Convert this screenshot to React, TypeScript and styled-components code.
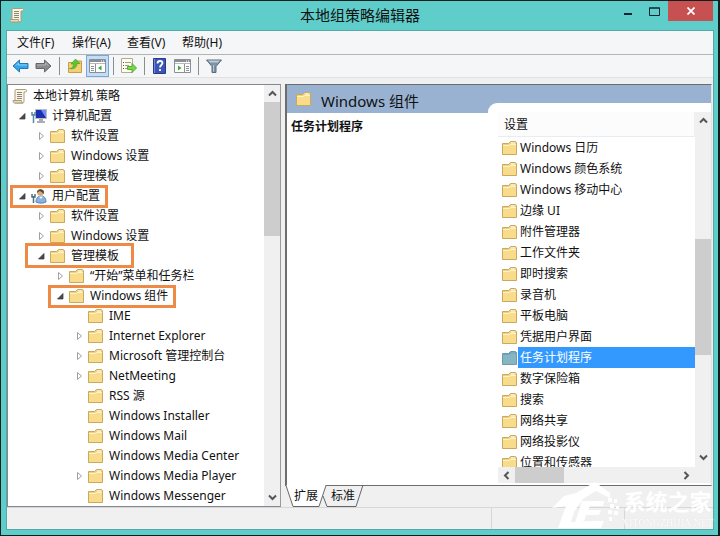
import React from "react";
import styled, { createGlobalStyle, css } from "styled-components";

const Global = createGlobalStyle`
  * { box-sizing: border-box; }
  html, body, #root { height: 100%; }
  body { margin: 0; overflow: hidden; }
  body, button {
    font-family: "Noto Sans", "Noto Sans CJK SC", sans-serif;
    font-size: 12px;
    line-height: 20px;
    color: #111;
  }
  button { border: 0; padding: 0; margin: 0; background: none; }
  ul { list-style: none; margin: 0; padding: 0; }
  svg { display: block; flex: none; }
`;

const Frame = styled.div`
  position: relative;
  display: flex;
  flex-direction: column;
  height: 100vh;
  padding: 0 5px 6px 6px;
  border: 1px solid #10201f;
  border-right-width: 2px;
  background: #5fcecb;
`;
const TitleBar = styled.header`
  display: grid;
  grid-template-columns: 92px 1fr 92px;
  height: 30px;
  flex: none;
`;
const TitleIcon = styled.div`
  padding: 6px 0 0 2px;
`;
const Title = styled.h1`
  margin: 0;
  font-size: 15px;
  font-weight: 400;
  line-height: 28px;
  text-align: center;
`;
const WindowButtons = styled.div`
  display: flex;
  justify-content: flex-end;
  align-items: flex-start;
`;
const WindowButton = styled.button<{ $close?: boolean }>`
  display: grid;
  place-items: center;
  width: ${(p) => (p.$close ? 45 : 27)}px;
  height: 20px;
  flex: none;
  background: ${(p) => (p.$close ? "#c75050" : "transparent")};
`;
const Client = styled.main`
  flex: 1;
  min-height: 0;
  display: flex;
  flex-direction: column;
  background: #f0f0f0;
  outline: 1px solid #55a9a7;
`;
const MenuBar = styled.nav`
  display: flex;
  height: 24px;
  flex: none;
  padding: 0 10px;
  background: #f5f6f7;
  border-bottom: 1px solid #b4b4b4;
`;
const MenuItem = styled.button`
  width: 55px;
  text-align: left;
  line-height: 22px;
`;
const ToolBar = styled.div`
  display: flex;
  align-items: center;
  height: 23px;
  flex: none;
  padding-left: 2px;
  background: #f5f6f7;
  border-bottom: 1px solid #e2e2e2;
`;
const Tool = styled.button<{ $active?: boolean }>`
  display: grid;
  place-items: center;
  width: 23px;
  height: 22px;
  ${(p) =>
    p.$active &&
    css`
      background: #c4dcf5;
      border: 1px solid #74a9dc;
    `}
`;
const Separator = styled.span`
  width: 1px;
  height: 18px;
  margin: 0 3px 0 4px;
  background: #8d8d8d;
`;
const Panes = styled.div`
  flex: 1;
  min-height: 0;
  display: grid;
  grid-template-columns: minmax(0, 274fr) minmax(0, 427fr);
  gap: 4px;
  padding: 6px 1px 0 0;
`;
const TreePane = styled.section`
  display: flex;
  min-height: 0;
  background: #fff;
  border: 1px solid #828790;
  border-right-color: #9a9a9a;
`;
const Tree = styled.ul`
  flex: 1;
  min-width: 0;
  overflow: hidden;
  padding-top: 1px;
`;
const TreeRow = styled.li<{ $level: number }>`
  display: flex;
  height: 20px;
  padding-left: ${(p) => (p.$level ? 19 * p.$level - 13 : 4)}px;
`;
const Node = styled.div`
  position: relative;
  display: flex;
  align-items: center;
`;
const Highlight = styled.span<{ $wide?: boolean }>`
  position: absolute;
  inset: ${(p) => (p.$wide ? "-3px -15px -2px -8px" : "-1px -8px -2px -4px")};
  border: 3px solid #ed8a45;
  pointer-events: none;
`;
const Toggle = styled.button`
  display: grid;
  place-items: center;
  width: 17px;
  height: 20px;
`;
const NodeLabel = styled.button`
  display: flex;
  align-items: center;
  gap: 5px;
  white-space: nowrap;
`;
const IconBox = styled.span`
  width: 16px;
`;
const Spacer = styled.span`
  width: 17px;
`;
const ScrollV = styled.div`
  display: flex;
  flex-direction: column;
  width: 16px;
  flex: none;
  background: #f0f0f0;
`;
const ScrollH = styled.div`
  display: flex;
  height: 16px;
  flex: none;
  background: #f0f0f0;
`;
const ScrollButton = styled.button`
  display: grid;
  place-items: center;
  width: 17px;
  height: 17px;
  flex: none;
`;
const Track = styled.div<{ $before: number; $thumb: number; $after: number; $row?: boolean }>`
  flex: 1;
  display: grid;
  ${(p) => (p.$row ? "grid-template-columns" : "grid-template-rows")}: ${(p) =>
    `${p.$before}fr ${p.$thumb}fr ${p.$after}fr`};
  &::after {
    content: "";
    background: #cdcdcd;
    ${(p) => (p.$row ? "grid-column: 2" : "grid-row: 2")};
  }
`;
const RightSide = styled.div`
  display: flex;
  flex-direction: column;
  min-height: 0;
`;
const DetailPane = styled.section`
  flex: 1;
  min-height: 0;
  display: grid;
  grid-template-columns: minmax(0, 201fr) minmax(0, 223fr);
  grid-template-rows: 18px 10px minmax(0, 1fr);
  background: #fff;
  border: 1px solid #6d6d6d;
  border-left-width: 2px;
  border-right-color: #e3e3e3;
`;
const DetailHeader = styled.header`
  grid-area: 1 / 1 / 3 / 3;
  display: flex;
  align-items: center;
  gap: 10px;
  padding-left: 9px;
  background: #99b2d1;
`;
const DetailTitle = styled.h2`
  margin: 0;
  padding-top: 4px;
  font-size: 15px;
  font-weight: 400;
  line-height: 24px;
`;
const Description = styled.h3`
  grid-area: 3 / 1;
  margin: 0;
  padding: 4px;
  font-size: 12px;
  font-weight: 700;
  line-height: 20px;
`;
const Card = styled.div`
  grid-area: 2 / 2 / 4 / 3;
  display: flex;
  padding: 9px 0 2px 10px;
  background: #fff;
  border-top-left-radius: 9px;
`;
const ListColumn = styled.div`
  flex: 1;
  min-width: 0;
  display: flex;
  flex-direction: column;
`;
const ColumnHeader = styled.div`
  height: 25px;
  flex: none;
  padding-left: 6px;
  line-height: 26px;
  background: #fcfcfc;
  border-bottom: 1px solid #e9edf3;
  border-right: 1px solid #f0f0f0;
`;
const SettingList = styled.ul`
  flex: 1;
  min-height: 0;
  overflow: hidden;
`;
const Setting = styled.button`
  display: flex;
  align-items: center;
  width: 100%;
  height: 21px;
  padding-left: 4px;
`;
const SettingText = styled.span<{ $selected?: boolean }>`
  flex: 1;
  margin-left: 1px;
  padding-left: 2px;
  text-align: left;
  line-height: 21px;
  white-space: nowrap;
  ${(p) =>
    p.$selected &&
    css`
      color: #fff;
      background: #3399ff;
    `}
`;
const Tabs = styled.div`
  position: relative;
  display: flex;
  height: 22px;
  margin-top: -1px;
  flex: none;
`;
const Tab = styled.button`
  position: relative;
  width: 42px;
  height: 22px;
  margin-right: -5px;
`;
const TabShape = styled.svg`
  position: absolute;
  inset: 0;
`;
const TabText = styled.span`
  position: relative;
`;
const StatusBar = styled.footer`
  display: grid;
  grid-template-columns: 485fr 133fr 88fr;
  height: 22px;
  flex: none;
  border-top: 1px solid #d7d7d7;
`;
const StatusCell = styled.div`
  border-right: 1px solid #d7d7d7;
  &:last-child { border-right: 0; }
`;
const Watermark = styled.div`
  position: absolute;
  right: 5px;
  bottom: 6px;
  display: flex;
  align-items: flex-end;
  color: #fff;
  pointer-events: none;
`;
const MarkText = styled.div`
  display: flex;
  flex-direction: column;
  align-items: center;
`;
const MarkName = styled.span`
  font-size: 22px;
  font-weight: 700;
  line-height: 32px;
`;
const MarkUrl = styled.span`
  font-family: "Liberation Serif", serif;
  font-size: 10px;
  line-height: 12px;
  text-shadow: 0 0 1px #d8d8d8;
`;

const Folder = ({ selected = false }: { selected?: boolean }) => {
  const c = selected
    ? { back: "#6da3b5", front: "#86b5c4", line: "#6b9caf", light: "#86b5c4" }
    : { back: "#eed084", front: "#f8dc8c", line: "#c9a95c", light: "#fff3c4" };
  return (
    <svg width="15" height="16" viewBox="0 0 15 16">
      <path d="M.5 3.5h6l2-2h5l1 1v12H.5z" fill={c.back} stroke={c.line} />
      <path d="M9 3h4" stroke={selected ? c.light : "#fff"} />
      <path d="M1 5h6l2-1h5v10H1z" fill={c.front} />
      <path d="M1 5.5h6l2-1h5" fill="none" stroke={c.light} />
    </svg>
  );
};
const Scroll = () => (
  <svg width="16" height="16" viewBox="0 0 16 16">
    <path d="M4 1.500h9.500c1.500 0 1.500 2.500 0 2.500H12v9.500c0 1-.5 1.500-1.500 1.500H3V4C3 2.500 3 1.500 4 1.500z" fill="#fbf6e4" stroke="#ab9c80" />
    <path d="M1 12.500h8.500c0 1.500.5 2.500 1.500 2.500H2.500C1.500 15 1 14 1 12.500z" fill="#e6dabb" stroke="#ab9c80" />
    <path d="M5 4.500h5M5 6.500h5M5 8.500h5M5 10.500h5" stroke="#8b8578" />
  </svg>
);
const Computer = () => (
  <svg width="16" height="16" viewBox="0 0 16 16">
    <path d="M4.500 1.500h11v9h-11z" fill="#1c2fb0" stroke="#b9bdc8" />
    <path d="M10 2h5v8z" fill="#6f8df0" />
    <path d="M8 11h4v2h2v2H6v-2h2z" fill="#a9adb6" />
    <path d="M2.500 6v9M1 4v3h3V4" fill="none" stroke="#5b86a8" strokeWidth="1.500" />
  </svg>
);
const User = () => (
  <svg width="16" height="16" viewBox="0 0 16 16">
    <path d="M5 14c0-4 2-6 5-6s5 2 5 6c-2 1.500-8 1.500-10 0z" fill="#86b3e2" stroke="#5683b8" />
    <path d="M8 8.500l2 2.500 2-2.500z" fill="#fff" />
    <circle cx="9.500" cy="4.500" r="3.300" fill="#d8a878" />
    <path d="M6 5c-.5-5 7.500-5 7 0L12 6c0-2-2-2-3.500-3z" fill="#5c4632" />
    <path d="M2.500 8v7M1 6v3h3V6" fill="none" stroke="#4f6f86" strokeWidth="1.500" />
  </svg>
);
const Arrow = ({ open }: { open: boolean }) => (
  <svg width="9" height="10" viewBox="0 0 9 10">
    {open ? (
      <path d="M7 2.500V8H1.500z" fill="#4a4a4a" stroke="#333" strokeWidth=".7" />
    ) : (
      <path d="M2.500 1.500v7l4-3.500z" fill="#fff" stroke="#a0a0a0" />
    )}
  </svg>
);
const turns = { up: 0, right: 90, down: 180, left: 270 };
const Chevron = ({ to }: { to: keyof typeof turns }) => (
  <svg width="9" height="9" viewBox="0 0 9 9">
    <path d="M1 6.500l3.500-3.500L8 6.500" fill="none" stroke="#555" strokeWidth="2" transform={`rotate(${turns[to]} 4.500 4.500)`} />
  </svg>
);
const BigArrow = ({ forward = false }: { forward?: boolean }) => (
  <svg width="17" height="14" viewBox="0 0 17 14">
    <path
      d={forward ? "M16 7L9.500 1v3.500H1v5h8.500V13z" : "M1 7l6.500-6v3.500H16v5H7.500V13z"}
      fill={forward ? "#8b8b8b" : "#34a6ec"}
      stroke={forward ? "#666" : "#2874b5"}
    />
    <path d={forward ? "M2 6h8.500V4l3 2.500" : "M15 6H6.500V4L4 6.500"} fill="none" stroke={forward ? "#b3b3b3" : "#8ad6fb"} />
  </svg>
);
const UpFolder = () => (
  <svg width="16" height="16" viewBox="0 0 16 16">
    <path d="M1.500 4.500h6l1-1.500h6v11.500h-13z" fill="#f3cf74" stroke="#c79f4c" />
    <path d="M2.500 10.500c3 0 4-2 4-4.500H4L8.500 1 13 5.500h-3C10 9.500 7 11.500 2.500 10.500z" fill="#5fc52e" stroke="#3c9c1c" strokeWidth=".6" />
  </svg>
);
const PanelIcon = ({ flipped = false }: { flipped?: boolean }) => (
  <svg width="17" height="14" viewBox="0 0 17 14">
    <path d="M.5.5h16v13H.5z" fill="#fff" stroke="#8a8f96" />
    <path d="M1 2h15" stroke="#8a8f96" strokeWidth="2" />
    <path d="M12 2h1M14 2h1" stroke="#fff" />
    <path d="M1 4.500h15" stroke="#b5b9be" />
    {flipped ? (
      <>
        <path d="M10.500 5v8" stroke="#8a8f96" />
        <path d="M12 7.500h3M12 9.500h3M12 11.500h3" stroke="#8a8f96" />
        <path d="M4 6.500v5L7.500 9z" fill="#3daa35" />
      </>
    ) : (
      <>
        <path d="M6.500 5v8" stroke="#8a8f96" />
        <path d="M2 7.500h3M2 9.500h3M2 11.500h3" stroke="#8a8f96" />
        <path d="M12.500 6.500v5L9 9z" fill="#3daa35" />
      </>
    )}
  </svg>
);
const ExportIcon = () => (
  <svg width="16" height="16" viewBox="0 0 16 16">
    <path d="M.5.5h11v14H.5z" fill="#fffdf0" stroke="#b3aa90" />
    <path d="M2 4.500h1M2 7.500h1M2 10.500h1" stroke="#555" />
    <path d="M4 4.500h6M4 7.500h4M4 10.500h3" stroke="#9a9a9a" />
    <path d="M6.500 8.500H11V5.500l4.500 4.500-4.500 4.500v-3H6.500z" fill="#7bd44b" stroke="#4fae2c" />
  </svg>
);
const HelpIcon = () => (
  <svg width="13" height="16" viewBox="0 0 13 16">
    <path d="M.5.5h12v15H.5z" fill="#3a55b5" stroke="#263a8c" />
    <path d="M1.500 1v14" stroke="#7389da" />
    <path d="M4.500 5.500c0-3.500 5-3 5-.5 0 2-2.500 2-2.500 4.500M7 11v2" fill="none" stroke="#fff" strokeWidth="1.800" />
  </svg>
);
const FilterIcon = () => (
  <svg width="16" height="14" viewBox="0 0 16 14">
    <path d="M.5 1h15L10 7.500v6H6v-6z" fill="#7e93a5" stroke="#5b6d7d" />
    <path d="M2 1.500h12L12 3.500H4z" fill="#bccbd6" />
    <path d="M7.500 6v6.500" stroke="#b5c6d2" />
  </svg>
);
const HouseMark = () => (
  <svg width="70" height="47" viewBox="0 0 70 47">
    <path d="M0 26l12-12 12-3L43 0l15 11v5L44 9 31 17 22 30l-3 10 24-1h9l-3 7H6l8-22z" fill="#fff" />
    <path d="M30 19h22l-1 5H38l-2 4h13l-2 5H34l-2 6-9 2z" fill="#fff" />
    <path d="M56 16h4v4h-4zM62 17h3v4h-3zM58 22h4v4h-4zM64 24h3v3h-3zM56 28h4v4h-4zM62 29h4v4h-4zM57 35h3v4h-3z" fill="#fff" />
  </svg>
);

type Icon = "scroll" | "computer" | "user" | "folder";
type Item = { label: string; level: number; open?: boolean; icon?: Icon; mark?: "tight" | "wide" };
const tree: Item[] = [
  { label: "本地计算机 策略", level: 0, icon: "scroll" },
  { label: "计算机配置", level: 1, open: true, icon: "computer" },
  { label: "软件设置", level: 2, open: false },
  { label: "Windows 设置", level: 2, open: false },
  { label: "管理模板", level: 2, open: false },
  { label: "用户配置", level: 1, open: true, icon: "user", mark: "tight" },
  { label: "软件设置", level: 2, open: false },
  { label: "Windows 设置", level: 2, open: false },
  { label: "管理模板", level: 2, open: true, mark: "wide" },
  { label: "“开始”菜单和任务栏", level: 3, open: false },
  { label: "Windows 组件", level: 3, open: true, mark: "tight" },
  { label: "IME", level: 4 },
  { label: "Internet Explorer", level: 4, open: false },
  { label: "Microsoft 管理控制台", level: 4, open: false },
  { label: "NetMeeting", level: 4, open: false },
  { label: "RSS 源", level: 4 },
  { label: "Windows Installer", level: 4 },
  { label: "Windows Mail", level: 4 },
  { label: "Windows Media Center", level: 4 },
  { label: "Windows Media Player", level: 4, open: false },
  { label: "Windows Messenger", level: 4 },
];
const settings = [
  "Windows 日历", "Windows 颜色系统", "Windows 移动中心", "边缘 UI", "附件管理器", "工作文件夹",
  "即时搜索", "录音机", "平板电脑", "凭据用户界面", "任务计划程序", "数字保险箱", "搜索",
  "网络共享", "网络投影仪", "位置和传感器",
];
const icons: Record<Icon, React.ReactNode> = {
  scroll: <Scroll />,
  computer: <Computer />,
  user: <User />,
  folder: <Folder />,
};

export default function App() {
  return (
    <Frame>
      <Global />
      <TitleBar>
        <TitleIcon><Scroll /></TitleIcon>
        <Title>本地组策略编辑器</Title>
        <WindowButtons>
          <WindowButton aria-label="最小化">
            <svg width="8" height="10"><path d="M0 8h8" stroke="#123" strokeWidth="2" /></svg>
          </WindowButton>
          <WindowButton aria-label="最大化">
            <svg width="11" height="9"><path d="M.5 1h10v7.500H.5zM0 1h11" fill="none" stroke="#123" /></svg>
          </WindowButton>
          <WindowButton $close aria-label="关闭">
            <svg width="8" height="8"><path d="M.5.5l7 7M7.500.5l-7 7" stroke="#fff" strokeWidth="1.700" /></svg>
          </WindowButton>
        </WindowButtons>
      </TitleBar>
      <Client>
        <MenuBar>
          {["文件(F)", "操作(A)", "查看(V)", "帮助(H)"].map((m) => (
            <MenuItem key={m}>{m}</MenuItem>
          ))}
        </MenuBar>
        <ToolBar>
          <Tool aria-label="后退"><BigArrow /></Tool>
          <Tool aria-label="前进"><BigArrow forward /></Tool>
          <Separator />
          <Tool aria-label="上一级"><UpFolder /></Tool>
          <Tool $active aria-label="显示控制台树"><PanelIcon /></Tool>
          <Separator />
          <Tool aria-label="导出列表"><ExportIcon /></Tool>
          <Separator />
          <Tool aria-label="帮助"><HelpIcon /></Tool>
          <Tool aria-label="显示操作窗格"><PanelIcon flipped /></Tool>
          <Separator />
          <Tool aria-label="筛选"><FilterIcon /></Tool>
        </ToolBar>
        <Panes>
          <TreePane>
            <Tree>
              {tree.map((n, i) => (
                <TreeRow key={i} $level={n.level}>
                  <Node>
                    {n.level > 0 &&
                      (n.open === undefined ? (
                        <Spacer />
                      ) : (
                        <Toggle aria-label={n.label} aria-expanded={n.open}>
                          <Arrow open={n.open} />
                        </Toggle>
                      ))}
                    <NodeLabel>
                      <IconBox>{icons[n.icon ?? "folder"]}</IconBox>
                      {n.label}
                    </NodeLabel>
                    {n.mark && <Highlight $wide={n.mark === "wide"} />}
                  </Node>
                </TreeRow>
              ))}
            </Tree>
            <ScrollV>
              <ScrollButton aria-label="向上"><Chevron to="up" /></ScrollButton>
              <Track $before={0} $thumb={134} $after={253} />
              <ScrollButton aria-label="向下"><Chevron to="down" /></ScrollButton>
            </ScrollV>
          </TreePane>
          <RightSide>
            <DetailPane>
              <DetailHeader>
                <Folder />
                <DetailTitle>Windows 组件</DetailTitle>
              </DetailHeader>
              <Description>任务计划程序</Description>
              <Card>
                <ListColumn>
                  <ColumnHeader>设置</ColumnHeader>
                  <SettingList>
                    {settings.map((s) => {
                      const selected = s === "任务计划程序";
                      return (
                        <li key={s}>
                          <Setting>
                            <Folder selected={selected} />
                            <SettingText $selected={selected}>{s}</SettingText>
                          </Setting>
                        </li>
                      );
                    })}
                  </SettingList>
                  <ScrollH>
                    <ScrollButton aria-label="向左"><Chevron to="left" /></ScrollButton>
                    <Track $row $before={0} $thumb={49} $after={114} />
                    <ScrollButton aria-label="向右"><Chevron to="right" /></ScrollButton>
                  </ScrollH>
                </ListColumn>
                <ScrollV>
                  <ScrollButton aria-label="向上"><Chevron to="up" /></ScrollButton>
                  <Track $before={110} $thumb={117} $after={94} />
                  <ScrollButton aria-label="向下"><Chevron to="down" /></ScrollButton>
                  <ScrollButton as="span" />
                </ScrollV>
              </Card>
            </DetailPane>
            <Tabs>
              <Tab>
                <TabShape width="42" height="22" viewBox="0 0 42 22">
                  <path d="M.5-1L8 21.500h26L41.500-1" fill="#fff" stroke="#666" />
                </TabShape>
                <TabText>扩展</TabText>
              </Tab>
              <Tab>
                <TabShape width="42" height="22" viewBox="0 0 42 22">
                  <path d="M1 11l4 10.500h29L41 0" fill="none" stroke="#666" />
                </TabShape>
                <TabText>标准</TabText>
              </Tab>
            </Tabs>
          </RightSide>
        </Panes>
        <StatusBar>
          <StatusCell />
          <StatusCell />
          <StatusCell />
        </StatusBar>
      </Client>
      <Watermark>
        <HouseMark />
        <MarkText>
          <MarkName>系统之家</MarkName>
          <MarkUrl>XITONGZHIJIA.NET</MarkUrl>
        </MarkText>
      </Watermark>
    </Frame>
  );
}
